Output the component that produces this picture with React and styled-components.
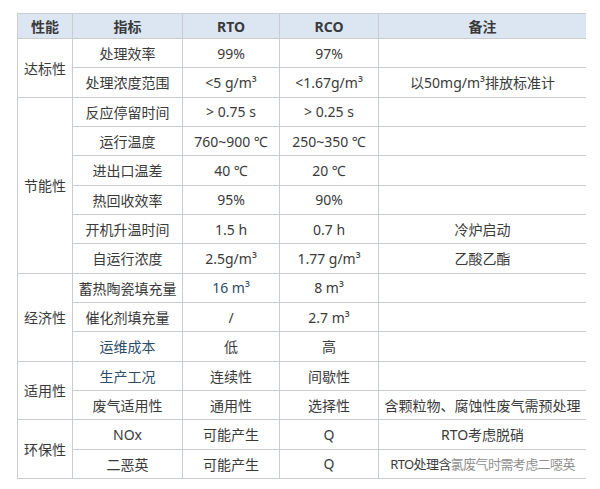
import React from "react";
import styled, { createGlobalStyle } from "styled-components";

const GlobalStyle = createGlobalStyle`
  html, body {
    margin: 0;
    padding: 0;
    background: #ffffff;
  }
  body {
    font-family: "Noto Sans", "Noto Sans CJK SC", sans-serif;
    color: #333333;
  }
`;

const Page = styled.div`
  width: 600px;
  height: 489px;
  padding: 13px 0 0 17px;
  box-sizing: border-box;
  overflow: hidden;
`;

const Grid = styled.div`
  display: grid;
  grid-template-columns: 54px 109px 96px 98px 207px;
  grid-template-rows: 24px repeat(15, 1fr);
  gap: 1px;
  width: 569px;
  height: 466px;
  box-sizing: border-box;
  padding: 1px;
  background: #c9cdd2;
`;

const HeadCell = styled.div`
  display: flex;
  align-items: center;
  justify-content: center;
  background: #dce6f2;
  font-size: 14px;
  font-weight: 700;
  color: #3a3a3a;
`;

const Cell = styled.div`
  display: flex;
  align-items: center;
  justify-content: center;
  background: #ffffff;
  font-size: 14px;
  color: ${(p) => (p.$tint ? "#2d4d68" : "#3a3a3a")};
  white-space: nowrap;
  overflow: hidden;
  grid-row: ${(p) => (p.$span ? `span ${p.$span}` : "auto")};
`;

const TightCell = styled(Cell)`
  font-size: 13px;
  letter-spacing: -0.6px;
`;

const Faded = styled.span`
  color: #8f8f8f;
`;

const groups = [
  {
    name: "达标性",
    rows: [
      ["处理效率", "99%", "97%", ""],
      ["处理浓度范围", "<5 g/m³", "<1.67g/m³", "以50mg/m³排放标准计"],
    ],
  },
  {
    name: "节能性",
    rows: [
      ["反应停留时间", "> 0.75 s", "> 0.25 s", ""],
      ["运行温度", "760~900 ℃", "250~350 ℃", ""],
      ["进出口温差", "40 ℃", "20 ℃", ""],
      ["热回收效率", "95%", "90%", ""],
      ["开机升温时间", "1.5 h", "0.7 h", "冷炉启动"],
      ["自运行浓度", "2.5g/m³", "1.77 g/m³", "乙酸乙酯"],
    ],
  },
  {
    name: "经济性",
    rows: [
      ["蓄热陶瓷填充量", "16 m³", "8 m³", ""],
      ["催化剂填充量", "/", "2.7 m³", ""],
      ["运维成本", "低", "高", ""],
    ],
  },
  {
    name: "适用性",
    rows: [
      ["生产工况", "连续性", "间歇性", ""],
      ["废气适用性", "通用性", "选择性", "含颗粒物、腐蚀性废气需预处理"],
    ],
  },
  {
    name: "环保性",
    rows: [
      ["NOx", "可能产生", "Q", "RTO考虑脱硝"],
      ["二恶英", "可能产生", "Q", "LAST"],
    ],
  },
];

const tinted = ["16 m³", "运维成本", "生产工况"];

function App() {
  return (
    <>
      <GlobalStyle />
      <Page>
        <Grid>
          <HeadCell>性能</HeadCell>
          <HeadCell>指标</HeadCell>
          <HeadCell>RTO</HeadCell>
          <HeadCell>RCO</HeadCell>
          <HeadCell>备注</HeadCell>
          {groups.map((g) =>
            g.rows.map((r, i) => (
              <React.Fragment key={g.name + i}>
                {i === 0 && <Cell $span={g.rows.length}>{g.name}</Cell>}
                {r.slice(0, 3).map((v, j) => (
                  <Cell key={j} $tint={tinted.includes(v)}>
                    {v}
                  </Cell>
                ))}
                {r[3] === "LAST" ? (
                  <TightCell>
                    RTO处理含<Faded>氯废气时需考虑二噁英</Faded>
                  </TightCell>
                ) : (
                  <Cell>{r[3]}</Cell>
                )}
              </React.Fragment>
            ))
          )}
        </Grid>
      </Page>
    </>
  );
}

export default App;
